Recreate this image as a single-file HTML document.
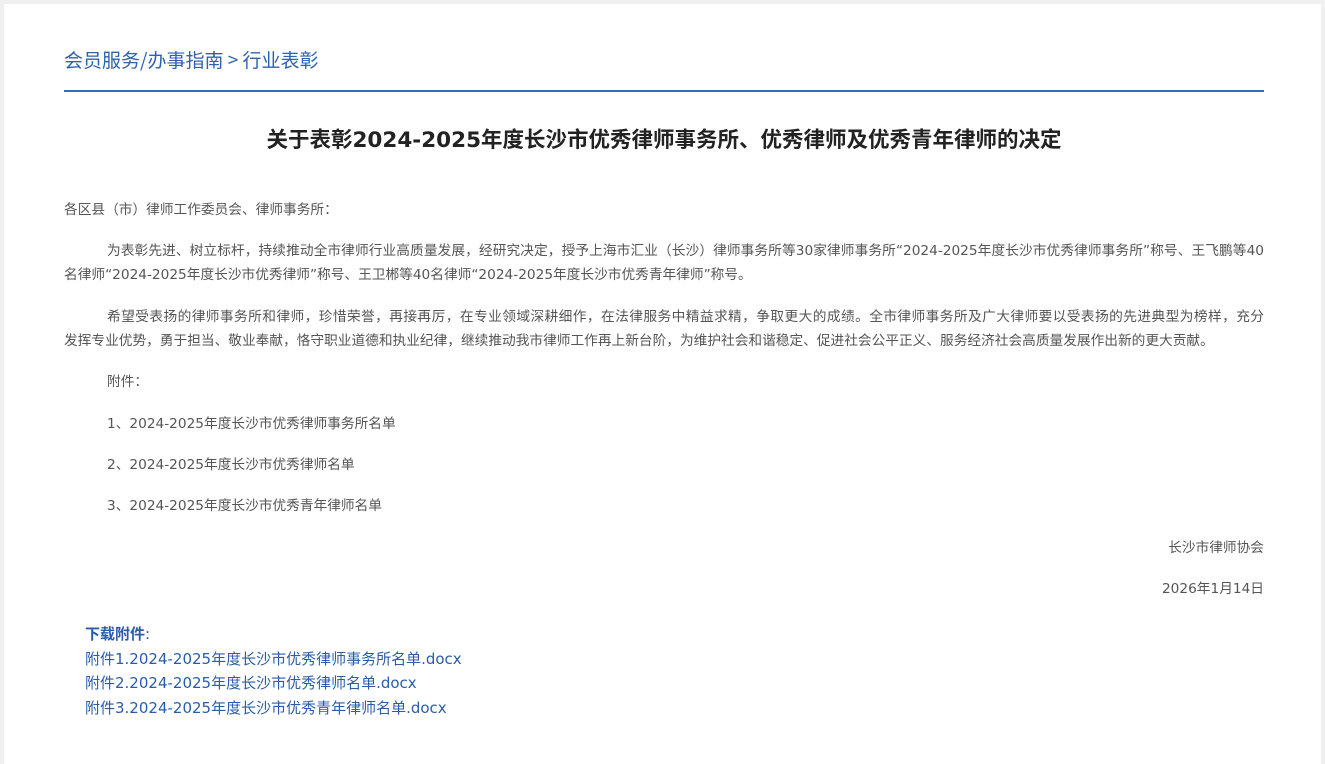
<!DOCTYPE html>
<html><head><meta charset="utf-8"><style>
html,body{margin:0;padding:0;background:#f0f0f0;}
body{width:1325px;height:758px;overflow:hidden;font-family:"DejaVu Sans","Noto Sans CJK SC",sans-serif;}
.wrap{position:absolute;left:4px;top:4px;width:1317px;height:760px;background:#fff;}
.crumb{position:absolute;left:60px;top:42px;font-size:19px;color:#2f62ad;font-family:"Noto Sans CJK SC",sans-serif;}
.line{position:absolute;left:60px;top:86px;width:1200px;height:2px;background:#3a6cb5;}
.title{position:absolute;left:60px;top:119px;width:1200px;text-align:center;font-size:21.5px;font-weight:bold;color:#222;}
.body{position:absolute;left:60px;top:194px;width:1200px;font-size:13.7px;color:#555;line-height:24px;white-space:nowrap;}
.body p{margin:0 0 17.4px 0;}
.j{display:block;text-align:justify;text-align-last:justify;white-space:normal;}
.ind{text-indent:43px;}
.ind .n{text-indent:0;display:block;}
.r{text-align:right;}
.dl{position:absolute;left:81px;top:618px;font-size:15px;color:#2a5caa;line-height:24.5px;}
</style></head><body><div class="wrap">
<div class="crumb">会员服务/办事指南 &gt; 行业表彰</div>
<div class="line"></div>
<div class="title">关于表彰2024-2025年度长沙市优秀律师事务所、优秀律师及优秀青年律师的决定</div>
<div class="body">
<p>各区县（市）律师工作委员会、律师事务所：</p>
<p class="ind"><span class="j">为表彰先进、树立标杆，持续推动全市律师行业高质量发展，经研究决定，授予上海市汇业（长沙）律师事务所等30家律师事务所“2024-2025年度长沙市优秀律师事务所”称号、王飞鹏等40</span><span class="n">名律师“2024-2025年度长沙市优秀律师”称号、王卫郴等40名律师“2024-2025年度长沙市优秀青年律师”称号。</span></p>
<p class="ind"><span class="j">希望受表扬的律师事务所和律师，珍惜荣誉，再接再厉，在专业领域深耕细作，在法律服务中精益求精，争取更大的成绩。全市律师事务所及广大律师要以受表扬的先进典型为榜样，充分</span><span class="n">发挥专业优势，勇于担当、敬业奉献，恪守职业道德和执业纪律，继续推动我市律师工作再上新台阶，为维护社会和谐稳定、促进社会公平正义、服务经济社会高质量发展作出新的更大贡献。</span></p>
<p class="ind">附件：</p>
<p class="ind">1、2024-2025年度长沙市优秀律师事务所名单</p>
<p class="ind">2、2024-2025年度长沙市优秀律师名单</p>
<p class="ind">3、2024-2025年度长沙市优秀青年律师名单</p>
<p class="r">长沙市律师协会</p>
<p class="r">2026年1月14日</p>
</div>
<div class="dl"><b>下载附件</b>:<br>附件1.2024-2025年度长沙市优秀律师事务所名单.docx<br>附件2.2024-2025年度长沙市优秀律师名单.docx<br>附件3.2024-2025年度长沙市优秀青年律师名单.docx</div>
</div></body></html>
